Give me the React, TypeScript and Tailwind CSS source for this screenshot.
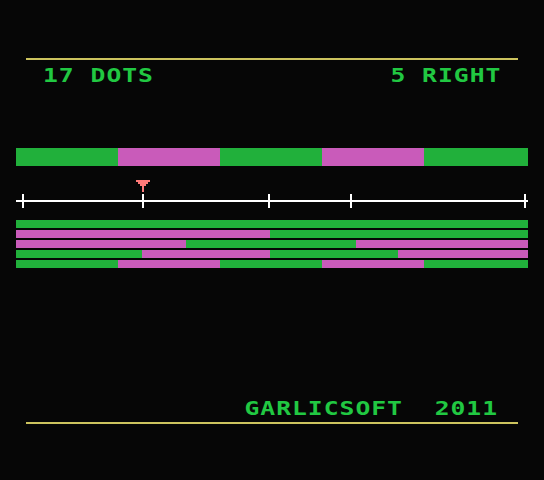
const G = "#21b03b";
const P = "#c95bba";

// widths in px, 512 total per row
const rows: [string, number][][] = [
  [[G, 512]],
  [[P, 254], [G, 258]],
  [[P, 170], [G, 170], [P, 172]],
  [[G, 126], [P, 128], [G, 128], [P, 130]],
  [[G, 102], [P, 102], [G, 102], [P, 102], [G, 104]],
];

const ticks = [6, 126, 252, 334, 508];

function Ruler() {
  return (
    <svg width="512" height="28" viewBox="0 0 512 28" className="mx-[16px] mt-[14px] block" shapeRendering="crispEdges">
      <rect x="0" y="20" width="512" height="2" fill="#ffffff" />
      {ticks.map((t) => (
        <rect key={t} x={t} y="14" width="2" height="14" fill="#ffffff" />
      ))}
      <g fill="#ff7978">
        <rect x="120" y="0" width="14" height="2" />
        <rect x="122" y="2" width="10" height="2" />
        <rect x="124" y="4" width="6" height="2" />
        <rect x="126" y="6" width="2" height="6" />
      </g>
    </svg>
  );
}

// blocky, wide 8-bit look: widen mono glyphs horizontally
const txt =
  "inline-block scale-x-[1.3] text-[19px] leading-none font-bold tracking-[0.75px] text-[#21c842] whitespace-pre";

export default function App() {
  return (
    <div
      className="flex h-[480px] w-[544px] flex-col bg-[#060606] pt-[58px]"
      style={{ fontFamily: '"DejaVu Sans Mono", monospace' }}
    >
      <div className="mx-[26px] h-[2px] bg-[#ccc35e]" />

      <div className="mt-[6px] flex justify-between pl-[43px] pr-[43px]">
        <span className={txt + " origin-left"}>17 DOTS</span>
        <span className={txt + " origin-right"}>5 RIGHT</span>
      </div>

      {/* big bar */}
      <div className="mx-[16px] mt-[63px] flex h-[18px]">
        {rows[4].map(([c, w], i) => (
          <div key={i} className="h-full" style={{ background: c, width: w }} />
        ))}
      </div>

      <Ruler />

      <div className="mx-[16px] mt-[12px] flex flex-col gap-[2px]">
        {rows.map((r, i) => (
          <div key={i} className="flex h-[8px]">
            {r.map(([c, w], j) => (
              <div key={j} className="h-full" style={{ background: c, width: w }} />
            ))}
          </div>
        ))}
      </div>

      <div className="mt-[131px] flex justify-end pr-[46px]">
        <span className={txt + " origin-right"}>GARLICSOFT  2011</span>
      </div>

      <div className="mx-[26px] mt-[4px] h-[2px] bg-[#ccc35e]" />
    </div>
  );
}
